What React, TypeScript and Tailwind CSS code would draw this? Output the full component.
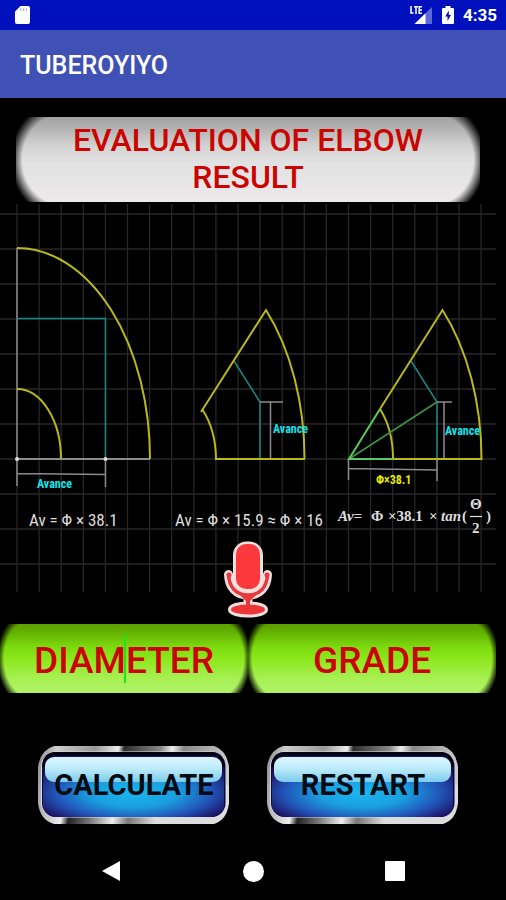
import * as React from 'react';

const COLUMNS = Array.from({ length: 22 }, (_, i) => 17 + i * 22.1);
const ROWS = Array.from({ length: 11 }, (_, i) => 12 + i * 35);

const StatusBar: React.FC = () => (
    <div className="flex h-[30px] items-center justify-between bg-[#0010bd] pl-[15px] pr-[9px] text-white">
        <svg viewBox="0 0 16 20" className="h-5 w-4" aria-hidden="true">
            <path d="M5.5 1H13a2 2 0 0 1 2 2v14a2 2 0 0 1-2 2H2a2 2 0 0 1-2-2V6.5z" fill="#fff" />
            <path d="M6 3.5v2M8.7 3.5v2M11.4 3.5v2" stroke="#7f86dd" strokeWidth="1" />
        </svg>
        <div className="flex items-center gap-[9px]">
            <svg viewBox="0 0 23 20" className="h-5 w-[23px]" aria-hidden="true">
                <path d="M22 2v17H4.500z" fill="#5a68d8" />
                <path d="M15.500 8.300V19H4.500z" fill="#fff" />
                <path d="M1 1v7h2.500M4 1.700h4M6 1.700V9M12 1.700H9.200V8.300H12M9.200 5H12" fill="none" stroke="#fff" strokeWidth="1.500" />
            </svg>
            <svg viewBox="0 0 12 20" className="h-5 w-3" aria-hidden="true">
                <path d="M3.500 1h5v2H11a1 1 0 0 1 1 1v14a1 1 0 0 1-1 1H1a1 1 0 0 1-1-1V4a1 1 0 0 1 1-1h2.500z" fill="#fff" />
                <path d="M6.800 5.500 3.200 11.500H5.500v4.500l3.400-6H6.800z" fill="#0010bd" />
            </svg>
            <span className="text-[17px] font-bold leading-5">4:35</span>
        </div>
    </div>
);

const Avance: React.FC<{ x: number; y: number }> = ({ x, y }) => (
    <text x={x} y={y} className="fill-[#10e4ea] font-['Liberation_Sans_Narrow','Roboto_Condensed',Roboto,sans-serif] text-[12px] font-bold">
        Avance
    </text>
);

const Formula: React.FC<{ x: number; children: React.ReactNode }> = ({ x, children }) => (
    <text x={x} y="324" className="fill-[#dedede] font-['Liberation_Sans_Narrow','Roboto_Condensed',Roboto,sans-serif] text-[17px]">
        {children}
    </text>
);

const ElbowDiagram: React.FC = () => (
    <svg viewBox="0 0 496 391" className="block w-full" role="img" aria-label="Elbow advance formulas">
        <g stroke="#272727" strokeWidth="1.300">
            {COLUMNS.map(x => (
                <path key={x} d={`M${x} 2V390`} />
            ))}
            {ROWS.map(y => (
                <path key={y} d={`M0 ${y}H496`} />
            ))}
        </g>

        {/* 90 degree elbow */}
        <g fill="none" strokeWidth="1.500">
            <path d="M17 46V284M105.500 257V285M17 271.500 105.500 272.500" stroke="#8d8a8d" />
            <path d="M17 257H150" stroke="#8d8a8d" strokeWidth="2" />
            <path d="M17 116.500H105.500V257" stroke="#148a86" />
            <path d="M17 46A133 211 0 0 1 150 257M17 187A44 70 0 0 1 61 257" stroke="#b9b81c" strokeWidth="2" />
        </g>
        <circle cx="17" cy="257" r="2" fill="#ddd" />
        <circle cx="105.500" cy="257" r="2" fill="#ddd" />
        <Avance x={37} y={286} />
        <Formula x={29}>Av = Φ × 38.1</Formula>

        {/* 45 degree elbow */}
        <g fill="none" strokeWidth="1.500">
            <path d="M234 159 260 200V257" stroke="#148a86" />
            <path d="M260 200H283M270.500 200V257" stroke="#8d8a8d" />
            <path d="M201 210 266 108A133 211 0 0 1 304.500 257" stroke="#b9b81c" strokeWidth="2" />
            <path d="M202 207A44 70 0 0 1 216 257H305" stroke="#b9b81c" strokeWidth="2" />
        </g>
        <Avance x={273} y={231} />
        <Formula x={175}>Av = Φ × 15.9 ≈ Φ × 16</Formula>

        {/* any angle */}
        <g fill="none" strokeWidth="1.500">
            <path d="M411 159 437 200V257" stroke="#148a86" />
            <path d="M437 200H452M444 200V257M348.500 257V278M437 257V279M348.500 266.500 437 268" stroke="#8d8a8d" />
            <path d="M380 207 442.500 108A133 211 0 0 1 481.500 257H393M380 207A44 70 0 0 1 393 257" stroke="#b9b81c" strokeWidth="2" />
            <path d="M349 257 437 200" stroke="#3f9446" />
            <path d="M380 207 349 257H393" stroke="#5cc95f" strokeWidth="2" />
        </g>
        <Avance x={445} y={233} />
        <text x="376" y="282" className="fill-[#e6e60a] font-['Liberation_Sans_Narrow','Roboto_Condensed',Roboto,sans-serif] text-[12px] font-bold">
            Φ×38.1
        </text>
        <g className="fill-[#dedede] font-['Liberation_Serif',serif] text-[15px] font-bold">
            <text x="338" y="319" className="italic">Av=</text>
            <text x="371" y="319">Φ</text>
            <text x="388" y="319">×38.1</text>
            <text x="429" y="319">×</text>
            <text x="441" y="319" className="italic">tan</text>
            <text x="462" y="319">(</text>
            <text x="470" y="307">Θ</text>
            <text x="472" y="331">2</text>
            <text x="486" y="319">)</text>
        </g>
        <path d="M470 314.500H482" stroke="#dedede" strokeWidth="1.200" />
    </svg>
);

const Microphone: React.FC = () => (
    <svg viewBox="0 0 50 78" className="h-[78px] w-[50px]" aria-hidden="true">
        <g fill="none" stroke="#f3dede" strokeLinecap="round" strokeLinejoin="round">
            <path d="M5.500 34.500C6 47 13 55 25 55S44 47 44.500 34.500" strokeWidth="9" />
            <path d="M25 55V66" strokeWidth="9" />
            <ellipse cx="25" cy="69.500" rx="17" ry="5" strokeWidth="6" fill="#f3dede" />
            <rect x="12.500" y="4" width="25" height="46" rx="11" strokeWidth="5" fill="#f3dede" />
        </g>
        <path d="M5.500 34.500C6 47 13 55 25 55S44 47 44.500 34.500" fill="none" stroke="#e8383c" strokeWidth="3.500" strokeLinecap="round" />
        <circle cx="6" cy="35" r="2.500" fill="#e8383c" />
        <circle cx="44" cy="35" r="2.500" fill="#e8383c" />
        <path d="M16 54H34L27 61V67H23V61z" fill="#e8383c" />
        <ellipse cx="25" cy="69.500" rx="17" ry="5" fill="#ee3639" />
        <rect x="13" y="4" width="24" height="45" rx="10" fill="#fb393c" />
    </svg>
);

const Field: React.FC<{ label: string; active?: boolean }> = ({ label, active }) => (
    <label className="relative block">
        <input
            type="text"
            aria-label={label}
            placeholder={label}
            className="block h-[69px] w-full bg-[radial-gradient(30px_44px_at_30px_50%,transparent_86%,#000_110%),radial-gradient(30px_44px_at_0px_50%,transparent_86%,#000_110%),linear-gradient(#5da000,#64b100_12%,#7cdc10_34%,#8de81e_52%,#a6f051_78%,#b0f266)] bg-[length:30px_100%,30px_100%,100%_100%] bg-[position:left_top,right_top,left_top] bg-no-repeat pt-[3px] text-center text-[37px] font-medium text-[#cb0400] outline-none placeholder:text-[#cb0400] placeholder:opacity-100"
        />
        {active && <span className="absolute left-1/2 top-[10px] h-[49px] w-[2px] bg-[#22e31a]" />}
    </label>
);

const GlossyButton: React.FC<{ id: string; children: React.ReactNode }> = ({ id, children }) => (
    <button type="button" className="relative h-[80px] flex-1 text-[29px] font-bold leading-8 text-[#020a12]">
        <svg viewBox="0 0 192 80" preserveAspectRatio="none" className="absolute inset-0 h-full w-full" aria-hidden="true">
            <defs>
                <linearGradient id={`${id}-top`} gradientUnits="userSpaceOnUse" x1="0" y1="0" x2="188" y2="30">
                    <stop offset="0" stopColor="#888" />
                    <stop offset=".1" stopColor="#ccc" />
                    <stop offset=".3" stopColor="#999" />
                    <stop offset=".42" stopColor="#eee" />
                    <stop offset=".45" stopColor="#2c2c2c" />
                    <stop offset=".64" stopColor="#8a8a8a" />
                    <stop offset=".7" stopColor="#eee" />
                    <stop offset=".76" stopColor="#888" />
                    <stop offset="1" stopColor="#ccc" />
                </linearGradient>
                <linearGradient id={`${id}-bottom`} gradientUnits="userSpaceOnUse" x1="0" y1="60" x2="188" y2="90">
                    <stop offset="0" stopColor="#aaa" />
                    <stop offset=".13" stopColor="#eee" />
                    <stop offset=".17" stopColor="#222" />
                    <stop offset=".28" stopColor="#777" />
                    <stop offset=".4" stopColor="#eee" />
                    <stop offset=".48" stopColor="#777" />
                    <stop offset=".62" stopColor="#ddd" />
                    <stop offset="1" stopColor="#ddd" />
                </linearGradient>
                <radialGradient id={`${id}-fill`} cx=".5" cy=".6" r=".6">
                    <stop offset="0" stopColor="#19b8ef" />
                    <stop offset=".4" stopColor="#1a9fe0" />
                    <stop offset=".72" stopColor="#2155b8" />
                    <stop offset="1" stopColor="#1d0c5c" />
                </radialGradient>
                <linearGradient id={`${id}-gloss`} x2="0" y2="1">
                    <stop offset="0" stopColor="#ddf8ff" />
                    <stop offset=".5" stopColor="#b8e9f8" />
                    <stop offset="1" stopColor="#7ccbee" />
                </linearGradient>
            </defs>
            <path d="M0 40V22Q2 5 16 1H176Q189 5 191 22V40z" fill={`url(#${id}-top)`} />
            <path d="M0 40V58Q2 75 16 79H176Q189 75 191 58V40z" fill={`url(#${id}-bottom)`} />
            <rect x="3" y="6.500" width="185" height="66" rx="15" fill="#dcdce4" />
            <rect x="4" y="7" width="183.500" height="65" rx="14" fill="#0b0740" />
            <rect x="5" y="11" width="181" height="61" rx="13" fill={`url(#${id}-fill)`} />
            <path d="M6 22Q6 8.500 18 8.500H173Q185 8.500 185 22" fill="none" stroke="#03020c" strokeWidth="3" />
            <rect x="7" y="12" width="177" height="25" rx="9" fill={`url(#${id}-gloss)`} />
        </svg>
        <span className="relative">{children}</span>
    </button>
);

const NavigationBar: React.FC = () => (
    <nav className="grid grid-cols-3 px-10">
        <button type="button" aria-label="Back" className="flex h-14 items-center justify-center">
            <svg viewBox="0 0 20 22" className="h-[22px] w-5"><path d="M1 11 19 1V21z" fill="#fff" /></svg>
        </button>
        <button type="button" aria-label="Home" className="flex h-14 items-center justify-center">
            <span className="size-[21px] rounded-full bg-white" />
        </button>
        <button type="button" aria-label="Recent apps" className="flex h-14 items-center justify-center">
            <span className="size-5 rounded-[1px] bg-white" />
        </button>
    </nav>
);

const App: React.FC = () => (
    <div className="min-h-screen bg-black font-[Roboto,sans-serif]">
        <StatusBar />
        <header className="flex h-[68px] items-center bg-[#3f51b5] px-5 pt-1">
            <span className="text-[25px] font-medium leading-8 text-white">TUBEROYIYO</span>
        </header>
        <main className="pt-[19px]">
            <h1 className="ml-4 mr-[26px] bg-[radial-gradient(46px_52px_at_46px_50%,transparent_86%,#000_112%),radial-gradient(46px_52px_at_0px_50%,transparent_86%,#000_112%),linear-gradient(#a3a3a3,#b0b0b0_12%,#d4d4d4_35%,#e2e2e2_55%,#ece9eb)] bg-[length:46px_100%,46px_100%,100%_100%] bg-[position:left_top,right_top,left_top] bg-no-repeat px-10 pb-[6px] pt-[5px] text-center text-[32px] font-medium leading-[37px] text-[#cb0400]">
                EVALUATION OF ELBOW RESULT
            </h1>
            <div className="mr-[10px]">
                <ElbowDiagram />
                <div className="-mt-[53px] flex justify-center">
                    <button type="button" aria-label="Speak" className="relative">
                        <Microphone />
                    </button>
                </div>
                <form className="mt-[6px] grid grid-cols-2">
                    <Field label="DIAMETER" active />
                    <Field label="GRADE" />
                </form>
            </div>
            <div className="mt-[52px] flex gap-[37px] pl-[38px] pr-[47px]">
                <GlossyButton id="calculate">CALCULATE</GlossyButton>
                <GlossyButton id="restart">RESTART</GlossyButton>
            </div>
        </main>
        <div className="pt-[18px]">
            <NavigationBar />
        </div>
    </div>
);

export default App;
